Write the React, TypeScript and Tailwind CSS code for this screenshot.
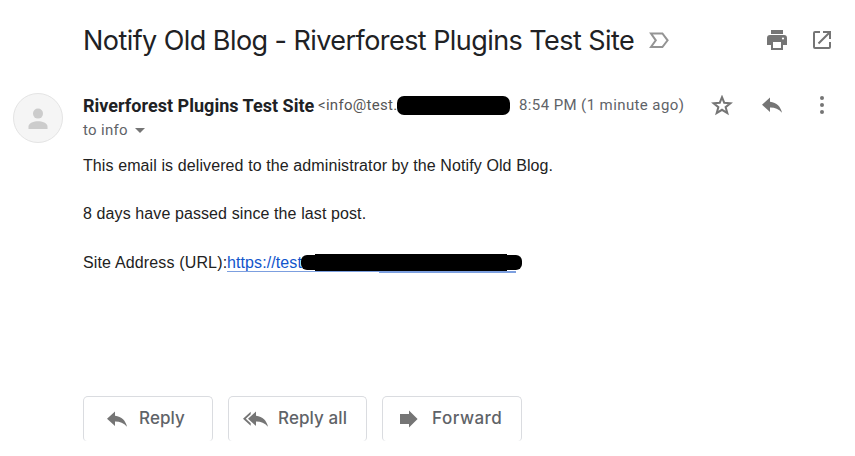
import type { ReactNode } from "react";

type IconProps = { className?: string };

function ReplyIcon({ className = "" }: IconProps) {
  return (
    <svg className={`shrink-0 ${className}`} width="20" height="16" viewBox="0 0 20 16" fill="#757575">
      <path d="M8 4.8V.5L0 7.7L8 14.9V10.5C12.7 10.4 16.5 11.8 20 15.8C18.7 9.8 14.8 5.7 8 4.8Z" />
    </svg>
  );
}

function ReplyAllIcon() {
  return (
    <svg className="shrink-0" width="25" height="16" viewBox="0 0 25 16" fill="#757575">
      <path d="M7.7 3.2V.7L0 7.7L7.7 14.7V12.2L2.8 7.7Z" />
      <path d="M13 4.8V.5L5 7.7L13 14.9V10.5C17.7 10.4 21.5 11.8 25 15.8C23.7 9.8 19.8 5.7 13 4.8Z" />
    </svg>
  );
}

function ForwardIcon() {
  return (
    <svg className="shrink-0" width="18" height="18" viewBox="0 0 18 18" fill="#757575">
      <path d="M0 4H9V.5L17.6 9L9 17.5V14H0Z" />
    </svg>
  );
}

function LabelIcon() {
  return (
    <svg className="shrink-0" width="20" height="17" viewBox="0 0 20 17" fill="none" stroke="#949494" strokeWidth="2">
      <path d="M2 1.5H13.4L18.6 8.3L13.4 15H2L6.8 8.3Z" />
    </svg>
  );
}

function PrintIcon() {
  return (
    <svg className="shrink-0" width="20" height="20" viewBox="0 0 20 20" fill="#757575">
      <path d="M4 0H16V4H4Z" />
      <path fillRule="evenodd" d="M3 5H17A3 3 0 0 1 20 8V15H16V20H4V15H0V8A3 3 0 0 1 3 5ZM6 12V18H14V12ZM16 7.4A1.1 1.1 0 1 0 16 9.6A1.1 1.1 0 1 0 16 7.4Z" />
    </svg>
  );
}

function PopOutIcon() {
  return (
    <svg className="shrink-0" width="18" height="18" viewBox="0 0 18 18" fill="#757575">
      <path d="M16 16H2V2H7V0H2A2 2 0 0 0 0 2V16A2 2 0 0 0 2 18H16A2 2 0 0 0 18 16V11H16ZM10 0V2H14.6L4.8 11.8L6.2 13.2L16 3.4V8H18V0Z" />
    </svg>
  );
}

function StarIcon() {
  return (
    <svg className="shrink-0" width="22" height="21" viewBox="0 0 22 21" fill="none" stroke="#757575" strokeWidth="2">
      <path d="M11 2.2L13.2 7.7L19.4 8.2L14.6 12.1L16.3 18.1L11 14.8L5.7 18.1L7.4 12.1L2.6 8.2L8.8 7.7Z" />
    </svg>
  );
}

function MoreIcon() {
  return (
    <svg className="shrink-0" width="4" height="18" viewBox="0 0 4 18" fill="#757575">
      <circle cx="2" cy="2" r="2" />
      <circle cx="2" cy="9" r="2" />
      <circle cx="2" cy="16" r="2" />
    </svg>
  );
}

function Avatar() {
  return (
    <div className="flex h-[50px] w-[50px] shrink-0 items-center justify-center rounded-full border border-[#e4e4e4] bg-[#f5f5f5] pt-px">
      <svg width="20" height="22" viewBox="0 0 20 22" fill="#cccccc">
        <circle cx="10" cy="5.6" r="5" />
        <path d="M.5 21V18.5C.5 15 6 13.2 10 13.2S19.5 15 19.5 18.5V21Z" />
      </svg>
    </div>
  );
}

function ActionButton({ className, children }: { className: string; children: ReactNode }) {
  return (
    <button
      className={`flex h-[45px] items-center whitespace-nowrap rounded-t-[5px] rounded-b-[4px] border border-b-0 border-[#dadce0] pb-px font-['Inter',sans-serif] font-medium text-[#5f6368] ${className}`}
    >
      {children}
    </button>
  );
}

export default function App() {
  return (
    <main className="h-[456px] w-[855px] overflow-hidden bg-white font-['Roboto',sans-serif] text-[#202124]">
      <header className="flex h-[80px] items-center pl-[83px]">
        <h1 className="w-[566px] shrink-0 whitespace-nowrap pt-[2px] font-['Inter',sans-serif] text-[27px] leading-[36px] tracking-[-0.56px]">
          Notify Old Blog - Riverforest Plugins Test Site
        </h1>
        <LabelIcon />
        <div className="ml-auto flex items-center gap-[26px] pr-[24px]">
          <PrintIcon />
          <PopOutIcon />
        </div>
      </header>

      <section className="flex h-[70px] pt-[13px] pl-[13px]">
        <Avatar />
        <div className="ml-[20px] min-w-0 flex-1">
          <div className="flex h-[24px] items-center">
            <span className="w-[235px] shrink-0 whitespace-nowrap text-[18px] font-bold tracking-[0.02px]">
              Riverforest Plugins Test Site
            </span>
            <span className="w-[79px] shrink-0 whitespace-nowrap text-[15px] tracking-[0.3px] text-[#555]">
              &lt;info@test.
            </span>
            <span className="h-[19px] w-[113px] shrink-0 rounded-[7px] bg-black" />
            <span className="ml-[9px] w-[192px] shrink-0 whitespace-nowrap text-[15px] tracking-[0.4px] text-[#5f6368]">
              8:54 PM (1 minute ago)
            </span>
            <StarIcon />
            <ReplyIcon className="ml-[29px]" />
            <span className="ml-[38px] flex">
              <MoreIcon />
            </span>
          </div>
          <div className="flex h-[26px] items-center gap-[7px] text-[15px] tracking-[0.3px] text-[#5f6368]">
            <span>to info</span>
            <svg width="10" height="5" viewBox="0 0 10 5" fill="#757575">
              <path d="M0 0H10L5 5Z" />
            </svg>
          </div>
        </div>
      </section>

      <article className="flex h-[246px] flex-col gap-[24px] pt-[4px] pl-[83px] font-['Liberation_Sans',Arial,sans-serif] text-[16px] leading-[24px] tracking-[0.1px] text-[#222]">
        <p>This email is delivered to the administrator by the Notify Old Blog.</p>
        <p>8 days have passed since the last post.</p>
        <p className="mt-px flex h-[24px] items-center whitespace-nowrap">
          <span className="w-[144px] tracking-[0.15px]">Site Address (URL):</span>
          <span className="relative flex text-[#1155cc]">
            https://test
            <span className="absolute top-[20px] left-0 h-px w-[289px] bg-[#7c9fdf]" />
            <span className="absolute top-[20px] left-[152px] h-[2px] w-[137px] bg-[#7c9fdf]" />
            <span className="absolute top-[4px] left-[74px] h-[15px] w-[221px] rounded-[6px] bg-black" />
            <span className="absolute top-[3px] left-[88px] h-[17px] w-[192px] bg-black" />
          </span>
        </p>
      </article>

      <footer className="flex gap-[15px] pl-[83px]">
        <ActionButton className="w-[130px] gap-[12px] pl-[23px] text-[17px] tracking-[0.1px]">
          <ReplyIcon />
          Reply
        </ActionButton>
        <ActionButton className="w-[139px] gap-[10px] pl-[14px] text-[17px] tracking-[0.1px]">
          <ReplyAllIcon />
          Reply all
        </ActionButton>
        <ActionButton className="w-[140px] gap-[14px] pl-[17px] text-[17px] tracking-[0.5px]">
          <ForwardIcon />
          Forward
        </ActionButton>
      </footer>
    </main>
  );
}
